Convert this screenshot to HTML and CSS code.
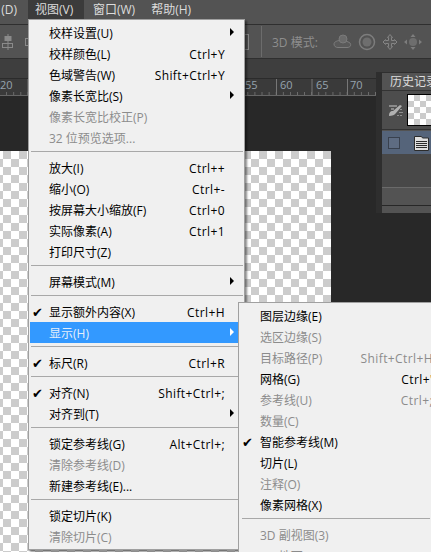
FILE: index.html
```html
<!DOCTYPE html>
<html lang="zh-CN">
<head>
  <meta charset="UTF-8" />
  <title>视图菜单</title>
  <link rel="stylesheet" href="styles.css">
</head>
<body>
  <div class="app">
    <div class="menubar">
      <span class="menubar-item cut">(D)</span>
      <span class="menubar-item open">视图(V)</span>
      <span class="menubar-item">窗口(W)</span>
      <span class="menubar-item">帮助(H)</span>
    </div>

    <div class="toolbar">
      <svg class="tool-align" width="14" height="16" viewBox="0 0 14 16">
        <path d="M7 0v16" stroke="#8a8a8a" fill="none"/>
        <rect x="3.500" y="2" width="7" height="5" fill="#8a8a8a"/>
        <rect x="1.500" y="9.500" width="10" height="4" fill="none" stroke="#8a8a8a"/>
      </svg>
      <span class="tool-stub"></span>
      <span class="tool-stub right"></span>
      <span class="tool-divider"></span>
      <span class="mode-label">3D 模式:</span>
      <svg class="mode-icon" width="19" height="16" viewBox="0 0 19 16">
        <path d="M1 10c0-2 3-3.500 6-3.500 3 .5 8 .5 10 2.500 1.500 2 .5 4.500-3 4.500H5C2.500 13.500 1 12 1 10z" fill="#5a5a5a" stroke="#7d7d7d"/>
        <circle cx="10" cy="5" r="4" fill="#6b6b6b" stroke="#7a7a7a"/>
      </svg>
      <svg class="mode-icon" width="18" height="18" viewBox="0 0 18 18">
        <circle cx="9" cy="9" r="7.500" fill="none" stroke="#7d7d7d" stroke-width="1.500"/>
        <circle cx="9" cy="9" r="4.500" fill="#6e6e6e"/>
      </svg>
      <svg class="mode-icon" width="16" height="16" viewBox="0 0 16 16">
        <path d="M8 .5l2.500 3H9.500v3h3v-1l2.500 2.500-2.500 2.500v-1h-3v3h1L8 15.500l-2.500-3h1v-3h-3v1L1 8l2.500-2.500v1h3v-3h-1z" fill="#585858" stroke="#858585"/>
      </svg>
      <svg class="mode-icon" width="18" height="16" viewBox="0 0 18 16">
        <path d="M9 0l2.500 3h-5zM9 16l-2.500-3h5zM0 8l3-2.500v5zM18 8l-3-2.500v5z" fill="#7d7d7d"/>
        <circle cx="9" cy="8" r="4" fill="#6e6e6e"/>
      </svg>
    </div>

    <div class="tabbar"></div>
    <div class="ruler">
      <span class="ruler-num left">20</span>
      <span class="ruler-num n55">55</span>
      <span class="ruler-num n60">60</span>
      <span class="ruler-num n65">65</span>
      <span class="ruler-num n70">70</span>
    </div>
    <div class="canvas"><div class="checker"></div></div>
  </div>

  <div class="panel">
    <div class="panel-title">历史记录</div>
    <div class="panel-snapshot">
      <svg width="16" height="14" viewBox="0 0 16 14">
        <path d="M1 13c0-3 1-5 4-5l7-6 2 1-6 7c-1 2-4 3-7 3z" fill="#b0b0b0"/>
        <path d="M1 3h8M3 6h3" stroke="#c8c8c8"/>
        <path d="M13 6v1M12 9v1M14 9v1M10 12v1M13 12v1" stroke="#d0d0d0"/>
      </svg>
      <div class="panel-thumb"></div>
    </div>
    <div class="panel-row">
      <span class="panel-box"></span>
      <svg width="15" height="16" viewBox="0 0 15 16">
        <path d="M.5 1.500h7l1 1.500h6v12.500H.5z" fill="#e0e0e0" stroke="#2c2c2c"/>
        <path d="M2 6.500h11M2 8.500h11M2 10.500h11M2 12.500h11" stroke="#2c2c2c"/>
      </svg>
    </div>
    <div class="panel-rest"></div>
    <div class="panel-strip"></div>
    <div class="panel-strip short"></div>
  </div>

  <div class="menu main-menu">
    <div class="item"><span></span><span>校样设置(U)</span><span></span><i class="arrow"></i></div>
    <div class="item"><span></span><span>校样颜色(L)</span><span class="keys">Ctrl+Y</span><i></i></div>
    <div class="item"><span></span><span>色域警告(W)</span><span class="keys">Shift+Ctrl+Y</span><i></i></div>
    <div class="item"><span></span><span>像素长宽比(S)</span><span></span><i class="arrow"></i></div>
    <div class="item off"><span></span><span>像素长宽比校正(P)</span><span></span><i></i></div>
    <div class="item off"><span></span><span>32 位预览选项...</span><span></span><i></i></div>
    <div class="sep"></div>
    <div class="item"><span></span><span>放大(I)</span><span class="keys">Ctrl++</span><i></i></div>
    <div class="item"><span></span><span>缩小(O)</span><span class="keys">Ctrl+-</span><i></i></div>
    <div class="item"><span></span><span>按屏幕大小缩放(F)</span><span class="keys">Ctrl+0</span><i></i></div>
    <div class="item"><span></span><span>实际像素(A)</span><span class="keys">Ctrl+1</span><i></i></div>
    <div class="item"><span></span><span>打印尺寸(Z)</span><span></span><i></i></div>
    <div class="sep"></div>
    <div class="item"><span></span><span>屏幕模式(M)</span><span></span><i class="arrow"></i></div>
    <div class="sep"></div>
    <div class="item"><span class="check">✔</span><span>显示额外内容(X)</span><span class="keys">Ctrl+H</span><i></i></div>
    <div class="item active"><span></span><span>显示(H)</span><span></span><i class="arrow"></i></div>
    <div class="sep"></div>
    <div class="item"><span class="check">✔</span><span>标尺(R)</span><span class="keys">Ctrl+R</span><i></i></div>
    <div class="sep"></div>
    <div class="item"><span class="check">✔</span><span>对齐(N)</span><span class="keys">Shift+Ctrl+;</span><i></i></div>
    <div class="item"><span></span><span>对齐到(T)</span><span></span><i class="arrow"></i></div>
    <div class="sep"></div>
    <div class="item"><span></span><span>锁定参考线(G)</span><span class="keys">Alt+Ctrl+;</span><i></i></div>
    <div class="item off"><span></span><span>清除参考线(D)</span><span></span><i></i></div>
    <div class="item"><span></span><span>新建参考线(E)...</span><span></span><i></i></div>
    <div class="sep"></div>
    <div class="item"><span></span><span>锁定切片(K)</span><span></span><i></i></div>
    <div class="item off"><span></span><span>清除切片(C)</span><span></span><i></i></div>
  </div>

  <div class="menu sub-menu">
    <div class="item"><span></span><span>图层边缘(E)</span><span></span><i></i></div>
    <div class="item off"><span></span><span>选区边缘(S)</span><span></span><i></i></div>
    <div class="item off"><span></span><span>目标路径(P)</span><span class="keys">Shift+Ctrl+H</span><i></i></div>
    <div class="item"><span></span><span>网格(G)</span><span class="keys">Ctrl+'</span><i></i></div>
    <div class="item off"><span></span><span>参考线(U)</span><span class="keys">Ctrl+;</span><i></i></div>
    <div class="item off"><span></span><span>数量(C)</span><span></span><i></i></div>
    <div class="item"><span class="check">✔</span><span>智能参考线(M)</span><span></span><i></i></div>
    <div class="item"><span></span><span>切片(L)</span><span></span><i></i></div>
    <div class="item off"><span></span><span>注释(O)</span><span></span><i></i></div>
    <div class="item"><span></span><span>像素网格(X)</span><span></span><i></i></div>
    <div class="sep"></div>
    <div class="item off"><span></span><span>3D 副视图(3)</span><span></span><i></i></div>
    <div class="item off"><span></span><span>3D 地面</span><span></span><i></i></div>
  </div>
</body>
</html>
```

FILE: styles.css
```css
html, body { margin: 0; height: 552px; overflow: hidden; background: #282828; }
body { position: relative; width: 431px; font-family: "Open Sans", "Noto Sans CJK SC", sans-serif; font-size: 12px; }

.app { display: flex; flex-direction: column; height: 552px; }

.menubar { display: flex; height: 24px; background: #535353; color: #dcdcdc; flex-shrink: 0; overflow: hidden; }
.menubar-item { box-sizing: border-box; height: 19px; line-height: 20px; padding: 0 7px; margin-right: 2px; }
.menubar-item.cut { width: 28px; margin: 0; padding: 0 11px 0 0; text-align: right; }
.menubar-item.open { width: 56px; background: #3b3b3b; }

.toolbar { display: flex; align-items: center; height: 33px; flex-shrink: 0; background: #535353; border-top: 1px solid #2f2f2f; border-bottom: 1px solid #2f2f2f; }
.tool-align { margin-left: 1px; }
.tool-stub { width: 4px; height: 6px; margin-left: 10px; border: 1px solid #8a8a8a; }
.tool-stub.right { width: 8px; height: 14px; margin-left: 208px; }
.tool-divider { width: 1px; height: 31px; margin-left: 12px; background: #6c6c6c; }
.mode-label { margin-left: 10px; width: 61px; color: #8e8e8e; }
.mode-icon { margin-right: 6px; }

.tabbar { height: 19px; flex-shrink: 0; background: #3e3e3e; }

.ruler { position: relative; height: 16px; flex-shrink: 0; background-color: #3a3a3a; border-top: 1px solid #2b2b2b; border-bottom: 1px solid #666; background-image: linear-gradient(90deg, #777 1px, transparent 1px), linear-gradient(90deg, #6f6f6f 1px, transparent 1px); background-size: 35.5px 100%, 7.1px 3px; background-position: 27.5px 0, 6.2px 100%; background-repeat: repeat-x; }
.ruler-num { position: absolute; top: -1px; font-size: 11px; line-height: 14px; color: #96a3ae; }
.ruler-num.left { left: 0; }
.n55 { left: 245px; }
.n60 { left: 280px; }
.n65 { left: 316px; }
.n70 { left: 350px; }

.canvas { flex: 1; min-height: 0; background: #282828; padding-top: 55px; }
.checker { width: 331px; height: 100%; background: repeating-conic-gradient(#cccccc 0 25%, #ffffff 0 50%) 11px 0 / 16px 16px; }

.panel { position: absolute; left: 382px; top: 72px; width: 49px; background: #535353; box-shadow: -6px 0 0 #2e2e2e; border-top: 1px solid #2f2f2f; }
.panel-title { height: 17px; line-height: 17px; padding-left: 8px; color: #dcdcdc; white-space: nowrap; overflow: hidden; border-bottom: 1px solid #333; }
.panel-snapshot { display: flex; align-items: center; gap: 3px; height: 38px; padding-left: 6px; background: #4d4d4d; border-bottom: 1px solid #333; overflow: hidden; }
.panel-snapshot svg { flex-shrink: 0; }
.panel-thumb { flex-shrink: 0; width: 40px; height: 30px; border: 1px solid #000; background: repeating-conic-gradient(#cccccc 0 25%, #ffffff 0 50%) 0 0 / 12px 12px; }
.panel-row { display: flex; align-items: center; gap: 14px; height: 23px; margin-top: 1px; padding-left: 6px; background: #55647a; }
.panel-box { width: 10px; height: 10px; border: 1px solid #39414e; background: #5e6c82; }
.panel-rest { height: 33px; background: #484848; border-bottom: 1px solid #6a6a6a; }
.panel-strip { height: 17px; background: #535353; border-bottom: 1px solid #272727; }
.panel-strip.short { height: 7px; border: 0; }

.menu { position: absolute; box-sizing: border-box; padding: 2px 1px; background: #f0f0f0; border: 1px solid #a0a0a0; color: #000; box-shadow: 2px 2px 2px rgba(0,0,0,.45); }
.main-menu { left: 28px; top: 19px; width: 217px; height: 531px; }
.sub-menu { left: 238px; top: 302px; width: 193px; height: 250px; overflow: hidden; border-right: 0; border-bottom: 0; }

.item { display: grid; grid-template-columns: 19px 1fr auto 18px; align-items: center; box-sizing: border-box; height: 21px; padding-top: 2px; line-height: 19px; white-space: nowrap; }
.sub-menu .item { grid-template-columns: 20px 1fr auto 25px; width: 218px; }
.item.off { color: #8c8c8c; }
.item.active { background: #3399ff; color: #e4eefa; }
.keys { letter-spacing: .4px; }
.check { font-family: "DejaVu Sans", sans-serif; font-size: 13px; line-height: 19px; padding-left: 2px; }
.arrow { width: 0; height: 0; margin-left: 5px; margin-bottom: 4px; border-left: 4px solid #000; border-top: 4px solid transparent; border-bottom: 4px solid transparent; }
.active .arrow { border-left-color: #fff; }

.sep { box-sizing: border-box; height: 9px; padding-top: 3px; }
.sep::before { content: ""; display: block; height: 1px; margin-left: 1px; background: #a8a8a8; }
.sub-menu .sep::before { margin-left: 2px; }
```
